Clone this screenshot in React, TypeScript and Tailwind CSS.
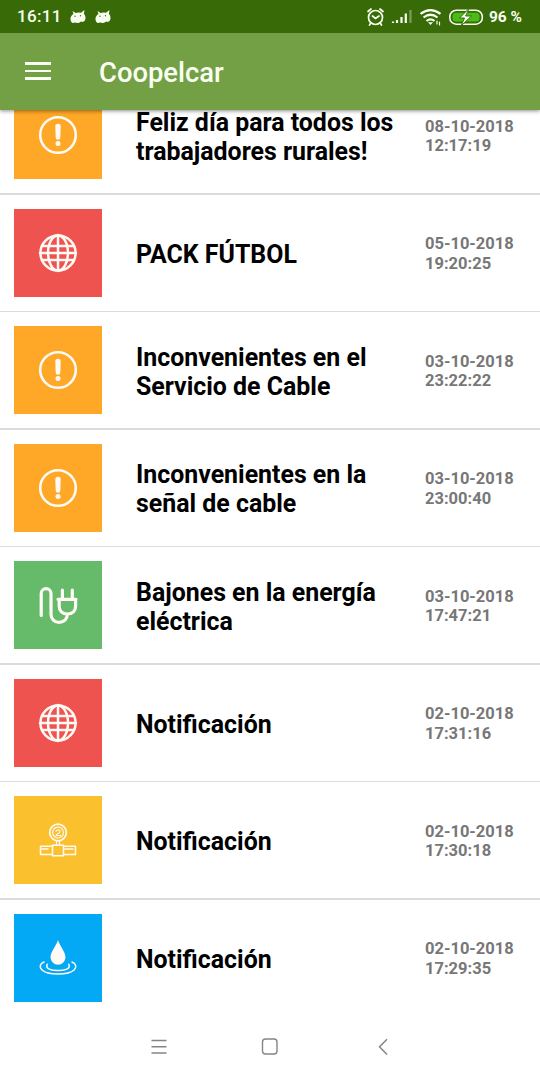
import type { ReactNode } from "react";

type Kind = "alert" | "globe" | "plug" | "gas" | "water";

interface Notice {
  kind: Kind;
  title: string[];
  date: string;
  time: string;
}

const notices: Notice[] = [
  { kind: "alert", title: ["Feliz día para todos los", "trabajadores rurales!"], date: "08-10-2018", time: "12:17:19" },
  { kind: "globe", title: ["PACK FÚTBOL"], date: "05-10-2018", time: "19:20:25" },
  { kind: "alert", title: ["Inconvenientes en el", "Servicio de Cable"], date: "03-10-2018", time: "23:22:22" },
  { kind: "alert", title: ["Inconvenientes en la", "señal de cable"], date: "03-10-2018", time: "23:00:40" },
  { kind: "plug", title: ["Bajones en la energía", "eléctrica"], date: "03-10-2018", time: "17:47:21" },
  { kind: "globe", title: ["Notificación"], date: "02-10-2018", time: "17:31:16" },
  { kind: "gas", title: ["Notificación"], date: "02-10-2018", time: "17:30:18" },
  { kind: "water", title: ["Notificación"], date: "02-10-2018", time: "17:29:35" },
];

const tileColors: Record<Kind, string> = {
  alert: "bg-[#ffa726]",
  globe: "bg-[#ef5350]",
  plug: "bg-[#66bb6a]",
  gas: "bg-[#fbc02d]",
  water: "bg-[#03a9f4]",
};

const drawings: Record<Kind, ReactNode> = {
  alert: (
    <>
      <circle cx="20" cy="20" r="17.8" strokeWidth="2.6" />
      <path d="M17.300 11.500a2.700 2.700 0 0 1 5.400 0l-.4 11a2.300 2.300 0 0 1-4.600 0Z" fill="currentColor" stroke="none" />
      <circle cx="20" cy="28.6" r="2.500" fill="currentColor" stroke="none" />
    </>
  ),
  globe: (
    <>
      <circle cx="20" cy="20" r="17.600" />
      <ellipse cx="20" cy="20" rx="10" ry="17.600" />
      <path d="M20 2v36M2 20h36M5 13h30M5 27h30" />
    </>
  ),
  plug: (
    <path
      d="M3.200 30.500V8.500a4.900 4.900 0 0 1 9.800 0V29.300a8.100 8.100 0 0 0 8.100 8.100c4.900 0 8.200-3.400 8.200-7.900M20 14.300h18M24.400 14V5M34.300 14V5M21.200 14.500v6.500c0 5 3.100 8 8.200 8s8.200-3 8.200-8v-6.500"
      strokeWidth="3.200"
    />
  ),
  gas: (
    <>
      <circle cx="20" cy="12.500" r="8.300" strokeWidth="1.700" />
      <circle cx="20" cy="12.500" r="5.400" strokeWidth="1.200" strokeDasharray="3 1" />
      <path d="M18 11.500c0-2 4-2.500 4 0s-4 2-4 4h4.500M18.500 21v4.500M21.500 21v4.500" strokeWidth="1.200" />
      <path d="M14.500 25.200h11v10.500h-11zM14.500 26.300H2.500v8.200h12M25.500 26.300h12v8.200h-12M4 29h6M27 29h8" strokeWidth="1.500" />
    </>
  ),
  water: (
    <>
      <path d="M20 2c-1.600 5.700-7.500 12-7.500 17.200a7.500 7.500 0 0 0 15 0C27.500 14 21.600 7.700 20 2Z" fill="currentColor" stroke="none" />
      <path d="M9.200 26.200c-2 4.600 3.800 6.300 10.800 6.300s12.800-1.700 10.800-6.300" strokeWidth="1.500" />
      <path d="M6 24c-4.200 1.700-5 5.200-2 8 5.600 5.300 26.400 5.300 32 0 3-2.800 2.200-6.300-2-8" strokeWidth="1.500" />
    </>
  ),
};

function NoticeRow({ kind, title, date, time }: Notice) {
  return (
    <li className="h-[117.5px]">
      <div className="flex h-[116px] items-center pl-3.5">
        <div className={`flex size-[88px] shrink-0 items-center justify-center ${tileColors[kind]}`}>
          <svg viewBox="0 0 40 40" className="size-10 text-[#fffaf5]" fill="none" stroke="currentColor" strokeWidth="2.500" strokeLinecap="round" strokeLinejoin="round">
            {drawings[kind]}
          </svg>
        </div>
        <h2 className="ml-[34px] w-[289px] pt-[2.5px] text-[24.9px] leading-[29px] font-bold text-black">
          {title.map((line) => (
            <span key={line} className="block whitespace-nowrap">{line}</span>
          ))}
        </h2>
        <div className="pt-[2px] text-[16.5px] leading-[19.5px] font-bold text-[#777]">
          <p>{date}</p>
          <p>{time}</p>
        </div>
      </div>
      <div className="h-[1.5px] bg-[#dcdcdc]" />
    </li>
  );
}

function DroidIcon() {
  return (
    <svg viewBox="0 0 16 14" className="h-3.5 w-4">
      <path d="M3.500 4 2.500 1l3 2Q8 2.300 11 2.800L14.500 0l-.6 3.800Q16 6 15.500 9q-1 4-4.500 2.500Q8.500 13.800 5 12.600 1 14 .5 9.500.2 6 3.500 4Z" fill="#f8fff0" />
      <circle cx="5" cy="6.200" r=".7" fill="#386a08" />
      <circle cx="10.500" cy="5.700" r=".7" fill="#386a08" />
    </svg>
  );
}

function StatusBar() {
  return (
    <div className="flex h-[33px] items-center bg-[#386a08] text-[#f8fff0]">
      <span className="ml-[17px] w-[53px] pt-px text-[17px] font-medium tracking-[0.3px]">16:11</span>
      <span className="flex gap-[9px]">
        <DroidIcon />
        <DroidIcon />
      </span>
      <svg viewBox="0 0 120 24" className="ml-auto h-6 w-[120px] shrink-0" fill="none" stroke="currentColor" strokeLinecap="round">
        <g strokeWidth="1.700">
          <circle cx="9.500" cy="12.500" r="7" />
          <path d="m6.500 11 3 2.500 3.500-2.500M2 6.500 5 4M14 4l3 2.500M4.500 18.500 3.500 20M14.500 18.500l1 1.500" />
        </g>
        <g strokeWidth="2.200" strokeLinecap="butt">
          <path d="M27 18v-1.500M31 18v-3M35.500 18v-6M39.800 18V8.500" />
          <path d="M44.500 18V5" opacity=".35" />
        </g>
        <g strokeWidth="2.200" strokeLinecap="butt">
          <path d="M54.500 8.800q10-7.500 20 0M57.500 12.500q7-5.500 14 0M60.500 16q4-3.300 8 0" />
        </g>
        <path d="m64.500 20-2.500-2.800h5Z" fill="currentColor" stroke="none" />
        <path d="M71 16v3M73.500 17v3" strokeWidth="1.200" />
        <rect x="83.800" y="5.200" width="32.500" height="14" rx="6.500" strokeWidth="1.600" />
        <rect x="86.500" y="7.800" width="27" height="8.800" rx="3.500" fill="#48bd18" stroke="none" />
        <path d="m103 3.500-9.500 9.500h5l-3.500 8 10.500-10h-5.500Z" fill="currentColor" stroke="#386a08" strokeWidth="1" />
      </svg>
      <span className="mr-[18px] ml-[3px] pt-[2px] text-[15.5px] font-bold">96 %</span>
    </div>
  );
}

function AppBar() {
  return (
    <header className="relative z-10 h-[110px] shrink-0 shadow-[0_1px_4px_rgba(0,0,0,0.45)]">
      <StatusBar />
      <div className="flex h-[77px] items-center bg-[#73a044] text-[#fafff4]">
        <button className="mb-px ml-[25px] flex w-[26px] flex-col gap-[5px]" aria-label="Menú">
          <span className="h-[2.5px] w-full bg-current" />
          <span className="h-[2.5px] w-full bg-current" />
          <span className="h-[2.5px] w-full bg-current" />
        </button>
        <h1 className="ml-12 pt-[3px] text-[27.4px] leading-8 font-medium">Coopelcar</h1>
      </div>
    </header>
  );
}

function NavigationBar() {
  return (
    <nav className="mt-auto flex h-[65px] shrink-0 items-center bg-white pb-px text-[#858585]">
      <svg viewBox="0 0 20 20" className="ml-[149px] size-5" fill="none" stroke="currentColor" strokeWidth="1.500">
        <path d="M2.500 3.500h15M2.500 9.700h15M2.500 16h15" />
      </svg>
      <svg viewBox="0 0 20 20" className="ml-[91px] size-5" fill="none" stroke="currentColor" strokeWidth="1.400">
        <rect x="2.500" y="2" width="14.500" height="15" rx="3" />
      </svg>
      <svg viewBox="0 0 20 20" className="ml-[93px] size-5" fill="none" stroke="currentColor" strokeWidth="1.500">
        <path d="M14 2.200 6.500 9.800l7.500 7.700" />
      </svg>
    </nav>
  );
}

export default function App() {
  return (
    <div className="flex h-[1080px] w-[540px] flex-col overflow-hidden bg-white font-['Roboto',sans-serif]">
      <AppBar />
      <main className="h-[905px] shrink-0">
        <ul className="-mt-[32.75px] h-[937px] overflow-hidden">
          {notices.map((notice) => (
            <NoticeRow key={notice.date + notice.time} {...notice} />
          ))}
        </ul>
      </main>
      <NavigationBar />
    </div>
  );
}
